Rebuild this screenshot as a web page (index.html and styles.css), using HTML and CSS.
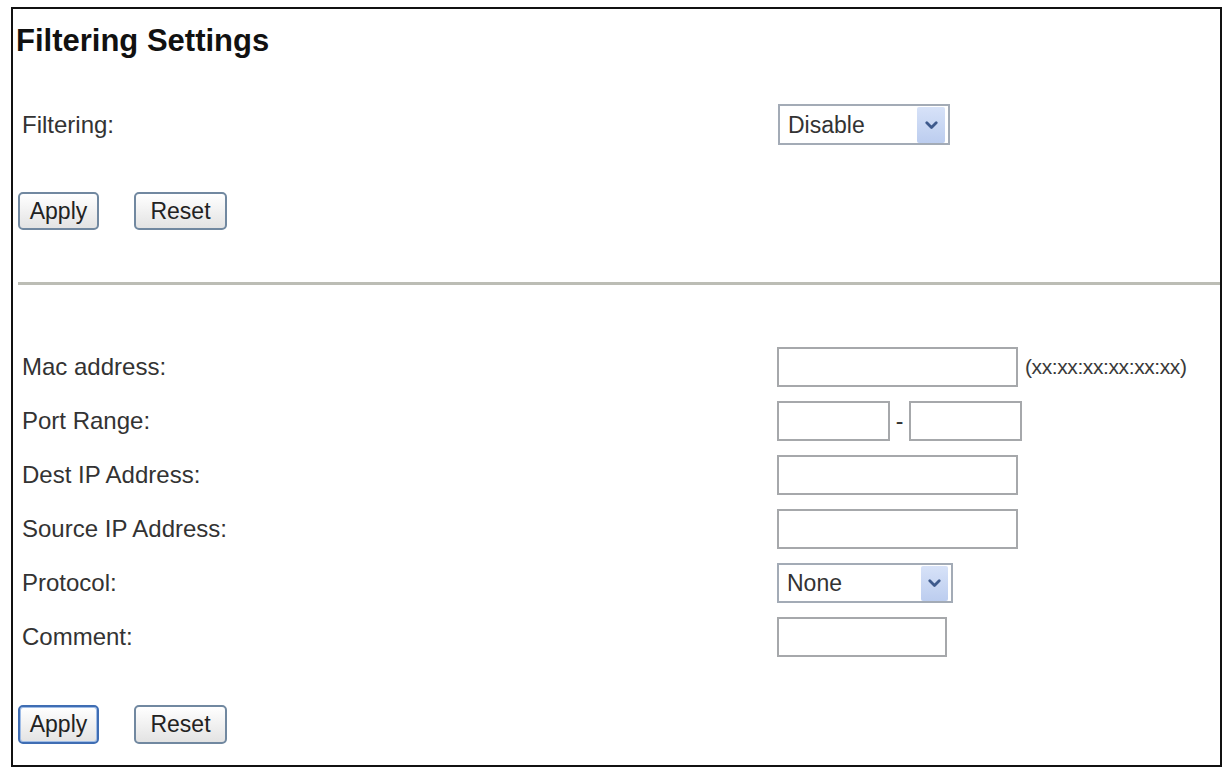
FILE: index.html
```html
<!DOCTYPE html>
<html lang="en">
<head>
  <meta charset="UTF-8">
  <title>Filtering Settings</title>
  <link rel="stylesheet" href="styles.css">
</head>
<body>

<div class="panel">
  <h1 class="title">Filtering Settings</h1>

  <div class="row row-filter">
    <label class="label" for="filtering">Filtering:</label>
    <div class="select select-filter">
      <select id="filtering">
        <option>Disable</option>
        <option>Allow</option>
        <option>Deny</option>
      </select>
      <span class="arrow"><svg width="13" height="9" viewBox="0 0 13 9"><polyline points="1.8,1.8 6.5,6.5 11.2,1.8" fill="none" stroke="#3e5a8c" stroke-width="2.8" stroke-linecap="round" stroke-linejoin="round"/></svg></span>
    </div>
  </div>

  <div class="buttons buttons-top">
    <button class="btn btn-apply">Apply</button>
    <button class="btn btn-reset">Reset</button>
  </div>

  <hr class="divider">

  <div class="fields">
    <div class="row">
      <label class="label" for="mac">Mac address:</label>
      <div class="controls">
        <input class="field field-wide" id="mac" type="text">
        <span class="hint">(xx:xx:xx:xx:xx:xx)</span>
      </div>
    </div>
    <div class="row">
      <label class="label" for="port-from">Port Range:</label>
      <div class="controls">
        <input class="field field-port" id="port-from" type="text">
        <span class="dash">-</span>
        <input class="field field-port" type="text">
      </div>
    </div>
    <div class="row">
      <label class="label" for="dest-ip">Dest IP Address:</label>
      <div class="controls">
        <input class="field field-wide" id="dest-ip" type="text">
      </div>
    </div>
    <div class="row">
      <label class="label" for="src-ip">Source IP Address:</label>
      <div class="controls">
        <input class="field field-wide" id="src-ip" type="text">
      </div>
    </div>
    <div class="row">
      <label class="label" for="protocol">Protocol:</label>
      <div class="select select-protocol">
        <select id="protocol">
          <option>None</option>
          <option>TCP</option>
          <option>UDP</option>
          <option>ICMP</option>
        </select>
        <span class="arrow"><svg width="13" height="9" viewBox="0 0 13 9"><polyline points="1.8,1.8 6.5,6.5 11.2,1.8" fill="none" stroke="#3e5a8c" stroke-width="2.8" stroke-linecap="round" stroke-linejoin="round"/></svg></span>
      </div>
    </div>
    <div class="row">
      <label class="label" for="comment">Comment:</label>
      <div class="controls">
        <input class="field field-comment" id="comment" type="text">
      </div>
    </div>
  </div>

  <div class="buttons buttons-bottom">
    <button class="btn btn-apply btn-default">Apply</button>
    <button class="btn btn-reset">Reset</button>
  </div>
</div>

</body>
</html>
```

FILE: styles.css
```css
body {
  margin: 0;
  background: #fff;
  font-family: "Liberation Sans", Arial, sans-serif;
  color: #333;
}
.panel {
  margin: 7px 7px 0 11px;
  border: 2px solid #111;
  padding: 14px 0 21px 4px;
}
.title {
  margin: 0 0 0 -1px;
  font-size: 31px; line-height: 36px;
  font-weight: bold; color: #111;
}

/* label column + control column */
.row {
  display: grid;
  grid-template-columns: 760px 1fr;
  align-items: center;
  height: 40px;
}
.row-filter { margin-top: 45px; height: 41px; }
.label {
  padding-left: 5px;
  font-size: 24px;
  color: #333;
}
.controls {
  display: flex;
  align-items: center;
}
.fields {
  display: flex; flex-direction: column;
  gap: 14px;
  margin-top: 62px;
}

.field {
  box-sizing: border-box;
  height: 40px;
  border: 2px solid #a6a8ab;
  background: #fff;
  margin: 0;
  font: 23px "Liberation Sans", Arial, sans-serif;
}
.field-wide { width: 241px; }
.field-port { width: 113px; }
.field-comment { width: 170px; }
.hint {
  margin-left: 7px;
  font-size: 21px; letter-spacing: -0.4px;
  color: #3a3a3a;
}
.dash {
  width: 19px; text-align: center;
  font-size: 23px; color: #333;
}

/* dropdowns */
.select {
  position: relative;
  box-sizing: border-box;
  height: 40px;
}
.select select {
  appearance: none; -webkit-appearance: none;
  box-sizing: border-box;
  width: 100%; height: 100%;
  margin: 0;
  border: 2px solid #a3abb6;
  background: #fff;
  padding: 0 0 0 8px;
  font: 23px "Liberation Sans", Arial, sans-serif;
  color: #333;
}
.select-filter { width: 172px; height: 41px; margin-left: 1px; }
.select-protocol { width: 176px; }
.select .arrow {
  position: absolute;
  top: 3px; right: 5px; bottom: 2px;
  width: 28px;
  display: flex; align-items: center; justify-content: center;
  background: linear-gradient(#d7e2f8, #bccdef);
  border-radius: 2px;
}
.select-protocol .arrow { width: 27px; right: 5px; }

/* buttons */
.buttons {
  display: flex;
  gap: 35px;
  margin-left: 1px;
}
.buttons-top { margin-top: 47px; }
.buttons-bottom { margin-top: 48px; }
.btn {
  box-sizing: border-box;
  height: 38px;
  padding: 0;
  border: 2px solid #7188a0;
  border-radius: 5px;
  background: linear-gradient(#ffffff, #e3e3e3);
  font: 23px "Liberation Sans", Arial, sans-serif;
  color: #222;
}
.btn-apply { width: 81px; }
.btn-reset { width: 93px; }
.buttons-bottom .btn { height: 39px; }
.btn-default {
  border-color: #3f6db3;
  box-shadow: inset 0 0 0 1px #9fbce6;
}

.divider {
  margin: 52px 0 0 1px;
  height: 3px;
  border: none;
  background: #bcbdb5;
}
```
